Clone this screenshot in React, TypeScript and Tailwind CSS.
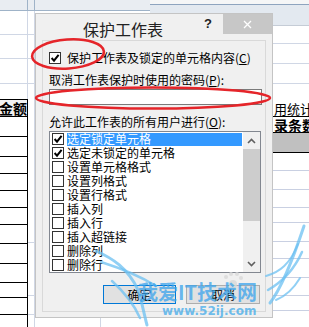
import React from 'react';

const items = [
  { label: '选定锁定单元格', checked: true, selected: true },
  { label: '选定未锁定的单元格', checked: true },
  { label: '设置单元格格式' },
  { label: '设置列格式' },
  { label: '设置行格式' },
  { label: '插入列' },
  { label: '插入行' },
  { label: '插入超链接' },
  { label: '删除列' },
  { label: '删除行' },
];

// row heights (border-box, line drawn at the bottom) for the sheet behind the dialog
const leftBlackRows = ['h-[20px]', 'h-[20px]', 'h-[17px]', 'h-[17px]', 'h-[17px]', 'h-[17px]', 'h-[19px]', 'h-[20px]', 'h-[19px]', 'h-[15px]', 'h-[17px]'];
const rightLightRows = ['h-[18px]', 'h-[19px]', 'h-[18px]', 'h-[15px]', 'h-[19px]', 'h-[17px]', 'h-[19px]', 'h-[18px]', 'h-[15px]'];

function Box({ checked }: { checked?: boolean }) {
  return (
    <span className="flex h-[12px] w-[12px] shrink-0 items-center justify-center border border-[#333] bg-white">
      {checked && (
        <svg width="10" height="10" viewBox="0 0 10 10">
          <path d="M1.6 5 L4 7.6 L8.6 1.8" fill="none" stroke="#000" strokeWidth="2" />
        </svg>
      )}
    </span>
  );
}

function Chevron({ up }: { up?: boolean }) {
  return (
    <svg width="9" height="6" viewBox="0 0 9 6">
      <path d={up ? 'M1 5 L4.5 1.5 L8 5' : 'M1 1 L4.5 4.5 L8 1'} fill="none" stroke="#606060" strokeWidth="1.6" />
    </svg>
  );
}

function Sheet() {
  return (
    <div className="flex h-[327px] w-[309px] bg-white font-['Noto_Sans_CJK_SC',sans-serif] text-black">
      {/* column A, left of the dialog */}
      <div className="flex w-[28px] flex-col">
        <div className="h-[11px] border-r border-b border-[#9fb3c8] bg-[#e9edf2]" />
        <div className="h-[24px] border-r border-b border-[#d0d7e5]" />
        <div className="h-[24px] border-r border-b border-[#d0d7e5]" />
        <div className="h-[25px] border-r border-b border-[#d0d7e5]" />
        <div className="h-[15px] border-r border-[#d0d7e5]" />
        <div className="flex h-[18px] items-center justify-end overflow-hidden border-y border-r border-black bg-[#f2f2f2] text-[14px] leading-none font-bold whitespace-nowrap">
          金额
        </div>
        {leftBlackRows.map((h, i) => (
          <div key={i} className={`${h} border-r border-b border-black`} />
        ))}
        <div className="flex-1 border-r border-black" />
      </div>
      {/* column B sliver */}
      <div className="flex w-[7px] flex-col">
        <div className="h-[11px] border-r border-b border-[#9fb3c8] bg-[#e9edf2]" />
        <div className="h-[24px] border-r border-b border-[#d0d7e5]" />
        <div className="h-[24px] border-r border-b border-[#d0d7e5]" />
        <div className="h-[25px] border-r border-b border-[#d0d7e5]" />
        <div className="h-[159px] border-r border-b border-[#d0d7e5]" />
        <div className="h-[53px] border-r border-b border-[#d0d7e5]" />
        <div className="h-[19px] border-r border-b border-[#d0d7e5]" />
        <div className="flex-1 border-r border-[#d0d7e5]" />
      </div>
      {/* under the dialog */}
      <div className="flex w-[238px] flex-col">
        <div className="flex h-[13px]">
          <div className="h-[11px] w-[115px] border-b border-[#9fb3c8] bg-[#e9edf2]" />
          <div className="flex flex-1 flex-col">
            <div className="h-[5px] border-b border-[#8ea4bf] bg-[#f5f6f7]" />
            <div className="flex-1 bg-[#e3e9f0]" />
          </div>
        </div>
        <div className="flex-1" />
        <div className="h-[9px] w-[66px] border-r border-[#d0d7e5]" />
      </div>
      {/* right of the dialog */}
      <div className="flex w-[36px] flex-col overflow-hidden whitespace-nowrap">
        <div className="h-[5px] border-b border-[#8ea4bf] bg-[#f5f6f7]" />
        <div className="h-[21px] border-b border-[#c5ccd6] bg-[#e3e9f0]" />
        <div className="h-[18px] border-b border-[#d0d7e5]" />
        <div className="h-[20px] border-b border-[#d0d7e5]" />
        <div className="h-[20px] border-b border-[#d0d7e5]" />
        <div className="h-[16px]" />
        <div className="flex h-[17px] items-center border-b border-black pl-[1px] text-[13px] leading-none">用统计</div>
        <div className="flex h-[16px] items-center border-b border-black pl-[1px] text-[14px] leading-none font-bold">录条数</div>
        <div className="h-[20px] border-b border-black bg-[#c0c0c0]" />
        {rightLightRows.map((h, i) => (
          <div key={i} className={`${h} border-b border-[#c9d0e2]`} />
        ))}
        <div className="flex-1" />
      </div>
    </div>
  );
}

function Dialog() {
  return (
    <div className="absolute top-[13px] left-[35px] flex h-[305px] w-[238px] flex-col border border-[#c4c4c4] bg-[#f0f0f0] font-['Noto_Sans_CJK_SC',sans-serif] text-[12px] leading-[14px] text-black">
      {/* title bar */}
      <div className="flex h-[26px]">
        <div className="flex-1 pt-[7px] pl-[47px] text-[16px] leading-[16px] text-[#222]">保护工作表</div>
        <div className="flex h-[20px] w-[30px] items-center justify-center font-['Liberation_Sans',sans-serif] text-[13px] font-bold text-[#222]">
          ?
        </div>
        <div className="flex h-[20px] w-[49px] items-center justify-center bg-[#c7c7c7]">
          <svg width="9" height="9" viewBox="0 0 9 9">
            <path d="M1 1 L8 8 M8 1 L1 8" stroke="#fff" strokeWidth="1.3" />
          </svg>
        </div>
      </div>
      {/* content panel */}
      <div className="mx-[6px] mb-[5px] flex flex-1 flex-col border border-[#d9d9d9]">
        <div className="mt-[10px] flex h-[14px] items-center gap-[6px] pl-[6px] whitespace-nowrap">
          <Box checked />
          <span>
            保护工作表及锁定的单元格内容(<span className="underline">C</span>)
          </span>
        </div>
        <div className="mt-[8px] h-[14px] pl-[6px] whitespace-nowrap">
          取消工作表保护时使用的密码(<span className="underline">P</span>):
        </div>
        <div className="mt-[2px] ml-[6px] h-[16px] w-[213px] border border-[#7a7a7a] bg-white" />
        <div className="mt-[10px] h-[14px] pl-[6px] whitespace-nowrap">
          允许此工作表的所有用户进行(<span className="underline">O</span>):
        </div>
        <div className="mt-[2px] ml-[6px] flex h-[142px] w-[212px] border border-[#828790] bg-white">
          <div className="flex flex-1 flex-col pr-[1px]">
            {items.map((it) => (
              <div key={it.label} className="flex h-[14px] items-center pl-[2px] whitespace-nowrap">
                <Box checked={it.checked} />
                <span
                  className={
                    it.selected
                      ? 'ml-[3px] flex h-[13px] flex-1 items-center bg-[#3399ff] text-white'
                      : 'ml-[3px] flex h-[13px] flex-1 items-center'
                  }
                >
                  {it.label}
                </span>
              </div>
            ))}
          </div>
          <div className="flex w-[17px] flex-col bg-[#f0f0f0]">
            <div className="flex h-[17px] items-center justify-center">
              <Chevron up />
            </div>
            <div className="h-[72px] bg-[#cdcdcd]" />
            <div className="flex-1" />
            <div className="flex h-[17px] items-center justify-center">
              <Chevron />
            </div>
          </div>
        </div>
        <div className="mt-[12px] ml-[60px] flex gap-[10px]">
          <div className="flex h-[19px] w-[73px] items-center justify-center border border-[#0078d7] bg-[#e1e1e1]">确定</div>
          <div className="flex h-[19px] w-[74px] items-center justify-center border border-[#adadad] bg-[#e1e1e1]">取消</div>
        </div>
      </div>
    </div>
  );
}

function Marks() {
  return (
    <>
      <svg className="pointer-events-none absolute top-0 left-0" width="309" height="327" viewBox="0 0 309 327">
        <g fill="none" stroke="#6cc0f2" strokeOpacity="0.75" strokeLinecap="round">
          <path d="M96 251 C112 258 128 268 138 290 C142 302 144 314 147 325" strokeWidth="3" />
          <path d="M101 262 C120 268 140 276 156 286" strokeWidth="2.5" />
          <path d="M112 281 C124 292 134 304 140 318" strokeWidth="2.5" />
          <path d="M270 303 C280 290 292 262 304 226" strokeWidth="3" />
          <path d="M268 290 C282 282 294 270 302 252" strokeWidth="2.5" />
          <path d="M266 276 C280 272 290 264 298 244" strokeWidth="2" />
          <path d="M276 300 C286 296 294 288 300 278" strokeWidth="2" />
        </g>
        <g fill="#d8d8d8" fillOpacity="0.8">
          <circle cx="233" cy="284" r="4" />
          <circle cx="226" cy="277" r="2" />
          <circle cx="231" cy="274" r="2" />
          <circle cx="237" cy="274" r="2" />
          <circle cx="241" cy="278" r="2" />
        </g>
        <g fill="none" stroke="#e5252a" strokeWidth="2.6">
          <ellipse cx="68" cy="54" rx="36" ry="14.5" transform="rotate(-4 68 54)" />
          <ellipse cx="153" cy="98" rx="117" ry="10.5" />
        </g>
      </svg>
      <div className="pointer-events-none absolute top-[281px] left-[138px] font-['Noto_Sans_CJK_SC',sans-serif] text-[20px] leading-[22px] font-bold whitespace-nowrap text-[#3aa3ec]/75">
        我爱IT技术网
      </div>
      <div className="pointer-events-none absolute top-[304px] left-[162px] font-['DejaVu_Sans',sans-serif] text-[12px] leading-[14px] font-bold text-[#4aaeea]/80">
        www.52ij.com
      </div>
    </>
  );
}

export default function App() {
  return (
    <div className="relative h-[327px] w-[309px] overflow-hidden">
      <Sheet />
      <Dialog />
      <Marks />
    </div>
  );
}
